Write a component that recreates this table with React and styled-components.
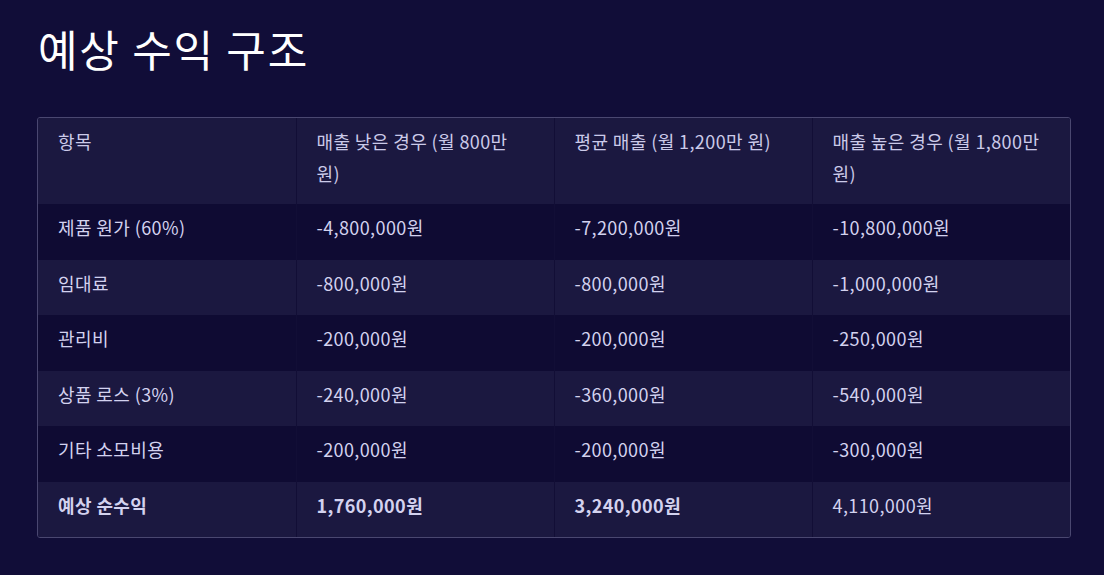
import React from "react";
import styled, { createGlobalStyle } from "styled-components";

const Global = createGlobalStyle`
  html, body { margin: 0; padding: 0; background: #110d38; }
  body { font-family: "Noto Sans CJK KR", "Noto Sans", sans-serif; }
`;

const Page = styled.div`
  padding: 20px 33px 30px 37px;
  min-height: 575px;
  box-sizing: border-box;
  background: #110d38;
`;

const Title = styled.h1`
  margin: 0 0 41px 1px;
  font-size: 43px;
  font-weight: 400;
  line-height: 56px;
  color: #ffffff;
  letter-spacing: 1.8px;
`;

const TableWrap = styled.div`
  border: 1px solid #4a4770;
  border-radius: 3px;
  overflow: hidden;
`;

const Table = styled.table`
  width: 100%;
  border-collapse: collapse;
  table-layout: fixed;
  font-size: 18px;
  color: #d3d2ef;
`;

const Row = styled.tr`
  background: ${(p) => (p.$shade ? "#1b1840" : "#0f0b33")};
`;

const Cell = styled.td`
  padding: 8px 20px 16px;
  line-height: 31.5px;
  vertical-align: top;
  text-align: left;
  letter-spacing: 0.4px;
  font-weight: ${(p) => (p.$bold ? 700 : 400)};
  border-left: 1px solid #120e36;
  &:first-child { border-left: none; }
`;

const HeadCell = styled(Cell).attrs({ as: "th" })`
  padding-bottom: 15px;
  font-weight: 400;
  color: #cbcae9;
`;

const headers = ["항목", "매출 낮은 경우 (월 800만 원)", "평균 매출 (월 1,200만 원)", "매출 높은 경우 (월 1,800만 원)"];

const rows = [
  ["제품 원가 (60%)", "-4,800,000원", "-7,200,000원", "-10,800,000원"],
  ["임대료", "-800,000원", "-800,000원", "-1,000,000원"],
  ["관리비", "-200,000원", "-200,000원", "-250,000원"],
  ["상품 로스 (3%)", "-240,000원", "-360,000원", "-540,000원"],
  ["기타 소모비용", "-200,000원", "-200,000원", "-300,000원"],
];

export default function App() {
  return (
    <>
      <Global />
      <Page>
        <Title>예상 수익 구조</Title>
        <TableWrap>
          <Table>
            <thead>
              <Row $shade>
                {headers.map((h) => (
                  <HeadCell key={h}>{h}</HeadCell>
                ))}
              </Row>
            </thead>
            <tbody>
              {rows.map((r, i) => (
                <Row key={r[0]} $shade={i % 2 === 1}>
                  {r.map((c, j) => (
                    <Cell key={j}>{c}</Cell>
                  ))}
                </Row>
              ))}
              <Row $shade>
                <Cell $bold>예상 순수익</Cell>
                <Cell $bold>1,760,000원</Cell>
                <Cell $bold>3,240,000원</Cell>
                <Cell>4,110,000원</Cell>
              </Row>
            </tbody>
          </Table>
        </TableWrap>
      </Page>
    </>
  );
}
